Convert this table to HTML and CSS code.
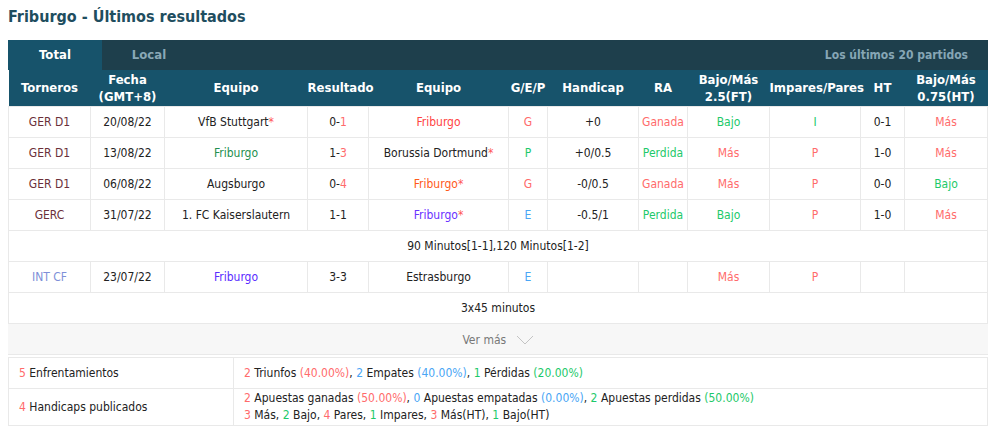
FILE: index.html
```html
<!DOCTYPE html>
<html lang="es">
<head>
  <meta charset="UTF-8">
  <title>Friburgo - Últimos resultados</title>
  <link rel="stylesheet" href="styles.css">
</head>
<body>

<h2 class="title">Friburgo - Últimos resultados</h2>

<div class="panel">
  <div class="tabs">
    <div class="tab active">Total</div>
    <div class="tab">Local</div>
    <div class="tabs-info">Los últimos 20 partidos</div>
  </div>

  <table class="results">
    <colgroup>
      <col style="width:82px"><col style="width:74px"><col style="width:143px"><col style="width:61px">
      <col style="width:140px"><col style="width:39px"><col style="width:91px"><col style="width:49px">
      <col style="width:82px"><col style="width:91px"><col style="width:44px"><col style="width:83px">
    </colgroup>
    <thead>
      <tr>
        <th>Torneros</th>
        <th>Fecha<br>(GMT+8)</th>
        <th>Equipo</th>
        <th>Resultado</th>
        <th>Equipo</th>
        <th>G/E/P</th>
        <th>Handicap</th>
        <th>RA</th>
        <th>Bajo/Más<br>2.5(FT)</th>
        <th>Impares/Pares</th>
        <th>HT</th>
        <th>Bajo/Más<br>0.75(HT)</th>
      </tr>
    </thead>
    <tbody>
      <tr>
        <td class="lg">GER D1</td>
        <td>20/08/22</td>
        <td>VfB Stuttgart<span class="star">*</span></td>
        <td>0-<span class="red">1</span></td>
        <td class="t-red">Friburgo</td>
        <td class="red">G</td>
        <td>+0</td>
        <td class="red">Ganada</td>
        <td class="green">Bajo</td>
        <td class="green">I</td>
        <td>0-1</td>
        <td class="red">Más</td>
      </tr>
      <tr>
        <td class="lg">GER D1</td>
        <td>13/08/22</td>
        <td class="t-green">Friburgo</td>
        <td>1-<span class="red">3</span></td>
        <td>Borussia Dortmund<span class="star">*</span></td>
        <td class="green">P</td>
        <td>+0/0.5</td>
        <td class="green">Perdida</td>
        <td class="red">Más</td>
        <td class="red">P</td>
        <td>1-0</td>
        <td class="red">Más</td>
      </tr>
      <tr>
        <td class="lg">GER D1</td>
        <td>06/08/22</td>
        <td>Augsburgo</td>
        <td>0-<span class="red">4</span></td>
        <td class="t-orange">Friburgo<span class="star">*</span></td>
        <td class="red">G</td>
        <td>-0/0.5</td>
        <td class="red">Ganada</td>
        <td class="red">Más</td>
        <td class="red">P</td>
        <td>0-0</td>
        <td class="green">Bajo</td>
      </tr>
      <tr>
        <td class="lg">GERC</td>
        <td>31/07/22</td>
        <td>1. FC Kaiserslautern</td>
        <td>1-1</td>
        <td class="t-purple">Friburgo<span class="star">*</span></td>
        <td class="blue">E</td>
        <td>-0.5/1</td>
        <td class="green">Perdida</td>
        <td class="green">Bajo</td>
        <td class="red">P</td>
        <td>1-0</td>
        <td class="red">Más</td>
      </tr>
      <tr class="note">
        <td colspan="12">90 Minutos[1-1],120 Minutos[1-2]</td>
      </tr>
      <tr>
        <td class="lg-friendly">INT CF</td>
        <td>23/07/22</td>
        <td class="t-violet">Friburgo</td>
        <td>3-3</td>
        <td>Estrasburgo</td>
        <td class="blue">E</td>
        <td></td>
        <td></td>
        <td class="red">Más</td>
        <td class="red">P</td>
        <td></td>
        <td></td>
      </tr>
      <tr class="note">
        <td colspan="12">3x45 minutos</td>
      </tr>
      <tr class="more">
        <td colspan="12">Ver más
          <svg class="chev" width="18" height="10" viewBox="0 0 18 10"><path d="M1 1 L9 9 L17 1" fill="none" stroke="#c4c4c4" stroke-width="1"/></svg>
        </td>
      </tr>
    </tbody>
  </table>

  <table class="summary">
    <tr>
      <td class="sum-label"><span class="red">5</span> Enfrentamientos</td>
      <td><span class="red">2</span> Triunfos <span class="red">(40.00%)</span>, <span class="blue">2</span> Empates <span class="blue">(40.00%)</span>, <span class="green">1</span> Pérdidas <span class="green">(20.00%)</span></td>
    </tr>
    <tr>
      <td class="sum-label"><span class="red">4</span> Handicaps publicados</td>
      <td class="two-lines">
        <span class="red">2</span> Apuestas ganadas <span class="red">(50.00%)</span>, <span class="blue">0</span> Apuestas empatadas <span class="blue">(0.00%)</span>, <span class="green">2</span> Apuestas perdidas <span class="green">(50.00%)</span><br>
        <span class="red">3</span> Más, <span class="green">2</span> Bajo, <span class="red">4</span> Pares, <span class="green">1</span> Impares, <span class="red">3</span> Más(HT), <span class="green">1</span> Bajo(HT)
      </td>
    </tr>
  </table>
</div>

</body>
</html>
```

FILE: styles.css
```css
* {
  box-sizing: border-box;
}

body {
  margin: 0;
  padding: 0 12px 0 8px;
  background: #fff;
  font-family: 'DejaVu Sans Condensed', 'DejaVu Sans', sans-serif;
  font-size: 12px;
  color: #222;
}

.title {
  margin: 0;
  padding: 7px 0 0 0;
  height: 40px;
  font-size: 16px;
  font-weight: bold;
  color: #1f4e5f;
}

.panel {
  width: 980px;
}

/* tab bar */
.tabs {
  display: flex;
  align-items: center;
  height: 30px;
  background: #1e3f4c;
}

.tab {
  width: 94px;
  height: 30px;
  line-height: 30px;
  text-align: center;
  font-weight: bold;
  font-size: 13px;
  color: #8aa8b6;
}

.tab.active {
  background: #17536b;
  color: #fff;
}

.tabs-info {
  margin-left: auto;
  padding-right: 20px;
  font-weight: bold;
  font-size: 12px;
  color: #86a6b5;
}

/* results table */
table {
  width: 100%;
  border-collapse: collapse;
  table-layout: fixed;
}

.results th {
  height: 36px;
  padding: 0;
  background: #17536b;
  color: #fff;
  font-size: 13px;
  font-weight: bold;
  line-height: 17px;
}

.results td {
  height: 31px;
  padding: 1px 0 0;
  border: 1px solid #e9e9e9;
  text-align: center;
  white-space: nowrap;
}

.results .more td {
  padding-top: 3px;
  background: #f7f7f7;
  color: #777;
  border-left-color: #f7f7f7;
  border-right-color: #f7f7f7;
}

.chev {
  margin-left: 6px;
  vertical-align: -1px;
}

.lg { color: #6b2f3a; }
.lg-friendly { color: #7e8fd8; }

.t-red { color: #ff4343; }
.t-green { color: #238f4f; }
.t-orange { color: #ff5a1a; }
.t-purple { color: #6a33ff; }
.t-violet { color: #5a2cff; }

.red { color: #ff6b6b; }
.green { color: #1dc96a; }
.blue { color: #4aa6f5; }
.star { color: #ff5555; }

/* summary */
.summary {
  margin-top: 2px;
}

.summary td {
  height: 31px;
  padding: 0 10px;
  border: 1px solid #e9e9e9;
  vertical-align: middle;
}

.summary .sum-label {
  width: 225px;
}

.summary .two-lines {
  height: 37px;
  line-height: 17px;
  padding-top: 1px;
}
```
